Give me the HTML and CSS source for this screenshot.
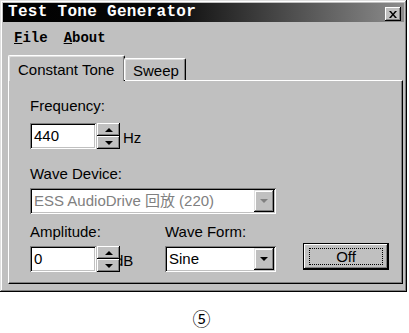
FILE: index.html
```html
<!DOCTYPE html>
<html lang="en">

<head>
  <meta charset="UTF-8">
  <title>Test Tone Generator</title>
  <link rel="stylesheet" href="styles.css">
</head>

<body>
  <div class="window">
    <div class="titlebar">
      <span class="title">Test Tone Generator</span>
      <span class="close">
        <svg width="8" height="7" viewBox="0 0 8 7">
          <path d="M0 0h2l2 2.5 2-2.5h2l-3 3.5 3 3.5h-2l-2-2.5-2 2.5h-2l3-3.5z" fill="#000"/>
        </svg>
      </span>
    </div>

    <div class="menubar">
      <span class="menu"><u>F</u>ile</span>
      <span class="menu"><u>A</u>bout</span>
    </div>

    <div class="tabs">
      <div class="tab active">Constant Tone</div>
      <div class="tab">Sweep</div>
    </div>

    <div class="panel">
      <div class="label">Frequency:</div>
      <div class="row">
        <div class="field">440</div>
        <div class="spin">
          <span class="spin-btn"><i class="arrow up"></i></span>
          <span class="spin-btn"><i class="arrow down"></i></span>
        </div>
        <span class="unit">Hz</span>
      </div>

      <div class="label device-label">Wave Device:</div>
      <div class="combo wide disabled">
        <span class="combo-text">ESS AudioDrive 回放 (220)</span>
        <span class="drop"><i class="arrow down"></i></span>
      </div>

      <div class="bottom-row">
        <div class="col amp-col">
          <div class="label">Amplitude:</div>
          <div class="row">
            <div class="field">0</div>
            <div class="spin">
              <span class="spin-btn"><i class="arrow up"></i></span>
              <span class="spin-btn"><i class="arrow down"></i></span>
            </div>
            <span class="unit db">dB</span>
          </div>
        </div>
        <div class="col form-col">
          <div class="label">Wave Form:</div>
          <div class="combo narrow">
            <span class="combo-text">Sine</span>
            <span class="drop"><i class="arrow down"></i></span>
          </div>
        </div>
        <div class="col btn-col">
          <button class="off-btn"><span class="focus">Off</span></button>
        </div>
      </div>
    </div>
  </div>

  <div class="caption">⑤</div>
</body>

</html>
```

FILE: styles.css
```css
body {
  margin: 0;
  background: #fff;
  font-family: "Liberation Sans", Arial, sans-serif;
  color: #000;
}

.window {
  width: 407px;
  height: 292px;
  box-sizing: border-box;
  padding: 3px;
  background: #c0c0c0;
  box-shadow: inset -1px -1px #000, inset 1px 1px #dfdfdf,
    inset -2px -2px #808080, inset 2px 2px #fff;
}

/* title bar */
.titlebar {
  height: 19px;
  display: flex;
  align-items: flex-start;
  justify-content: space-between;
  background: linear-gradient(90deg, #000 0%, #080808 40%, #8c8c8c 100%);
}

.title {
  font-family: "Liberation Mono", "Courier New", monospace;
  font-weight: bold;
  font-size: 16px;
  letter-spacing: 0.3px;
  line-height: 19px;
  color: #fff;
  padding-left: 5px;
}

.close {
  width: 16px;
  height: 14px;
  margin: 4px 3px 0 0;
  box-sizing: border-box;
  background: #c0c0c0;
  display: flex;
  align-items: center;
  justify-content: center;
  box-shadow: inset -1px -1px #000, inset 1px 1px #fff, inset -2px -2px #808080;
}

/* menu */
.menubar {
  display: flex;
  padding: 7px 0 0 3px;
  height: 26px;
  box-sizing: border-box;
}

.menu {
  font-family: "Liberation Mono", "Courier New", monospace;
  font-weight: bold;
  font-size: 14px;
  line-height: 18px;
  padding: 0 8px;
}

/* tabs */
.tabs {
  display: flex;
  align-items: flex-end;
  margin: 7px 0 0 5px;
  height: 25px;
  position: relative;
  z-index: 1;
}

.tab {
  font-size: 15px;
  box-sizing: border-box;
  height: 22px;
  line-height: 19px;
  padding: 2px 7px 0 8px;
  background: #c0c0c0;
  border-top: 1px solid #fff;
  border-left: 1px solid #fff;
  border-right: 1px solid #000;
  border-radius: 2px 2px 0 0;
  box-shadow: inset -1px 0 #808080, inset 1px 1px #dfdfdf;
}

.tab.active {
  width: 117px;
  height: 26px;
  margin-bottom: -1px;
  padding: 4px 0 0 9px;
}

.tab:not(.active) {
  width: 62px;
  margin-left: -1px;
}

/* panel */
.panel {
  margin-left: 5px;
  width: 395px;
  height: 204px;
  box-sizing: border-box;
  padding: 16px 0 0 21px;
  border-top: 1px solid #fff;
  border-left: 1px solid #fff;
  border-right: 1px solid #000;
  border-bottom: 1px solid #000;
  box-shadow: inset -1px -1px #808080;
}

.label {
  font-size: 15px;
  line-height: 17px;
}

.row {
  display: flex;
  align-items: flex-start;
  margin-top: 9px;
}

.field {
  width: 66px;
  height: 26px;
  box-sizing: border-box;
  background: #fff;
  font-size: 15px;
  line-height: 22px;
  padding: 2px 0 0 4px;
  box-shadow: inset 1px 1px #808080, inset -1px -1px #fff,
    inset 2px 2px #000, inset -2px -2px #c0c0c0;
}

.spin {
  width: 23px;
  height: 26px;
  margin-left: 1px;
  display: flex;
  flex-direction: column;
  position: relative;
  z-index: 1;
}

.spin-btn {
  flex: 1;
  background: #c0c0c0;
  display: flex;
  align-items: center;
  justify-content: center;
  box-shadow: inset -1px -1px #000, inset 1px 1px #fff, inset -2px -2px #808080;
}

.arrow {
  width: 0;
  height: 0;
  border-left: 4px solid transparent;
  border-right: 4px solid transparent;
}

.arrow.up {
  border-bottom: 4px solid #000;
}

.arrow.down {
  border-top: 4px solid #000;
}

.unit {
  font-size: 15px;
  line-height: 17px;
  margin: 6px 0 0 3px;
}

.unit.db {
  margin-left: -5px;
}

.device-label {
  margin-top: 16px;
}

/* combo boxes */
.combo {
  height: 26px;
  box-sizing: border-box;
  background: #fff;
  display: flex;
  align-items: stretch;
  padding: 2px;
  margin-top: 6px;
  box-shadow: inset 1px 1px #808080, inset -1px -1px #fff,
    inset 2px 2px #000, inset -2px -2px #c0c0c0;
}

.combo.wide {
  width: 246px;
}

.combo.narrow {
  width: 111px;
  margin-top: 6px;
}

.combo-text {
  flex: 1;
  font-size: 15px;
  line-height: 22px;
  padding-left: 2px;
  font-family: "Liberation Sans", "Noto Sans CJK SC", sans-serif;
}

.drop {
  width: 20px;
  background: #c0c0c0;
  display: flex;
  align-items: center;
  justify-content: center;
  box-shadow: inset -1px -1px #000, inset 1px 1px #dfdfdf,
    inset -2px -2px #808080, inset 2px 2px #fff;
}

.disabled .combo-text {
  color: #808080;
}

.disabled .arrow.down {
  border-top-color: #808080;
}

/* bottom row */
.bottom-row {
  display: flex;
  margin-top: 9px;
}

.amp-col {
  width: 135px;
}

.amp-col .row {
  margin-top: 6px;
}

.form-col {
  width: 138px;
}

.btn-col {
  padding-top: 20px;
}

.off-btn {
  width: 86px;
  height: 27px;
  padding: 4px 5px;
  font-family: inherit;
  font-size: 15px;
  background: #c0c0c0;
  border: 1px solid #000;
  box-shadow: inset -1px -1px #000, inset 1px 1px #fff, inset -2px -2px #808080;
  display: flex;
}

.focus {
  flex: 1;
  border: 1px dotted #000;
  line-height: 15px;
}

.caption {
  width: 403px;
  text-align: center;
  margin-top: 16px;
  font-family: "Noto Sans CJK SC", "DejaVu Sans", sans-serif;
  font-size: 18px;
  line-height: 20px;
}
```
